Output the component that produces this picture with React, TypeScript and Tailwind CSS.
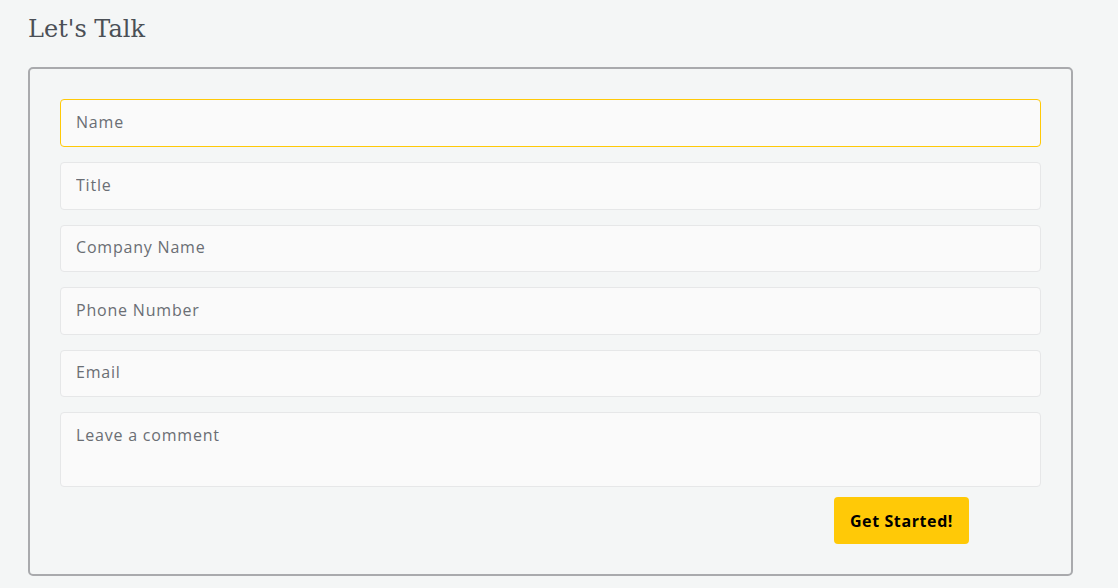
export default function App() {
  const fields = ["Title", "Company Name", "Phone Number", "Email"];

  return (
    <div className="min-h-[588px] bg-[#f4f6f6] px-[28px] pt-[13px] pb-[12px]">
      <h2
        className="text-[24px] leading-[32px] text-[#4b5056] mb-[22px]"
        style={{ fontFamily: '"DejaVu Serif", "Liberation Serif", serif' }}
      >
        Let's Talk
      </h2>

      <form
        className="w-[1045px] border-2 border-[#a9aaad] rounded-[5px] p-[30px] flex flex-col"
        style={{ fontFamily: '"Open Sans", "Liberation Sans", sans-serif' }}
      >
        <input
          className="w-full h-[48px] px-[15px] pb-[2px] bg-[#fafafa] border border-[#ffc907] rounded-[4px] text-[16px] tracking-[0.8px] text-[#5c6168] placeholder-[#6a6e74] outline-none"
          placeholder="Name"
        />

        {fields.map((f) => (
          <input
            key={f}
            className="w-full h-[47.5px] mt-[15px] px-[15px] pb-[2px] bg-[#fafafa] border border-[#e6e7e8] rounded-[4px] text-[16px] tracking-[0.8px] text-[#5c6168] placeholder-[#6a6e74] outline-none"
            placeholder={f}
          />
        ))}

        <textarea
          className="w-full h-[75px] mt-[15px] px-[15px] py-[10px] bg-[#fafafa] border border-[#e6e7e8] rounded-[4px] text-[16px] tracking-[0.8px] text-[#5c6168] placeholder-[#6a6e74] outline-none resize-none"
          placeholder="Leave a comment"
        />

        <div className="flex justify-end mt-[10px] pr-[72px]">
          <button
            type="button"
            className="w-[135px] h-[47px] bg-[#ffc907] rounded-[4px] text-[16px] tracking-[0.6px] font-bold text-black"
          >
            Get Started!
          </button>
        </div>
      </form>
    </div>
  );
}
